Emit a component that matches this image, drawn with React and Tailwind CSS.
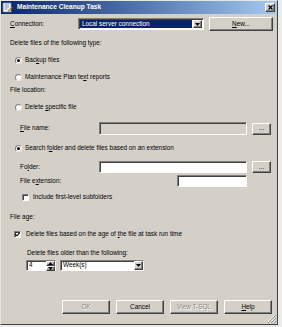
import React from 'react';

const sunken =
  'border border-t-[#808080] border-l-[#808080] border-r-white border-b-white shadow-[inset_1px_1px_0_#404040]';
const raised =
  'border border-t-white border-l-white border-r-[#404040] border-b-[#404040] shadow-[inset_-1px_-1px_0_#808080] bg-[#d4d0c8]';

const U = ({ children }) => <span className="underline underline-offset-[1px]">{children}</span>;

const Arrow = ({ up }) => (
  <svg width="5" height="3" viewBox="0 0 5 3">
    <path d={up ? 'M0 3 L2.5 0 L5 3 Z' : 'M0 0 L5 0 L2.5 3 Z'} fill="#000" />
  </svg>
);

const DropButton = () => (
  <div className={`w-[9px] h-full flex items-center justify-center ${raised}`}>
    <Arrow />
  </div>
);

const Radio = ({ checked }) => (
  <div className="w-[7px] h-[7px] rounded-full bg-white border border-t-[#808080] border-l-[#808080] border-r-[#e8e8e8] border-b-[#e8e8e8] flex items-center justify-center">
    {checked && <div className="w-[3px] h-[3px] rounded-full bg-black" />}
  </div>
);

const Checkbox = ({ checked }) => (
  <div className={`w-[7px] h-[7px] bg-white flex items-center justify-center ${sunken}`}>
    {checked && (
      <svg width="5" height="5" viewBox="0 0 5 5">
        <path d="M0.5 2.3 L2 3.8 L4.6 0.8" stroke="#000" strokeWidth="1.1" fill="none" />
      </svg>
    )}
  </div>
);

const Button = ({ children, disabled, className = '' }) => (
  <div
    className={`flex items-center justify-center ${raised} ${className} ${
      disabled ? 'text-[#8a8a8a] [text-shadow:1px_1px_0_#fff]' : ''
    }`}
  >
    {children}
  </div>
);

export default function App() {
  return (
    <div className="w-[282px] h-[327px] bg-[#ececec] font-['Liberation_Sans',Arial,sans-serif] text-[6.4px] leading-none text-black">
      <div className="relative w-[278px] h-[325px] bg-[#d4d0c8] border-t border-l border-t-[#e8e6e0] border-l-[#e8e6e0] border-r border-b border-r-[#404040] border-b-[#404040] flex flex-col">
        {/* title bar */}
        <div className="h-[13px] bg-gradient-to-r from-[#0a246a] to-[#a6caf0] flex items-center pl-[1px] pr-[2px]">
          <svg width="11" height="11" viewBox="0 0 11 11">
            <rect x="1" y="1" width="8" height="9" fill="#fff" stroke="#6b7fa8" strokeWidth="0.8" />
            <path d="M2.5 3 H7 M2.5 5 H7 M2.5 7 H5.5" stroke="#3b5fb0" strokeWidth="0.8" />
            <path d="M6 9.5 L10 5" stroke="#c08a30" strokeWidth="1.4" />
          </svg>
          <span className="ml-[4px] text-white font-bold text-[6.6px]">Maintenance Cleanup Task</span>
          <div className={`ml-auto w-[10px] h-[9px] flex items-center justify-center ${raised}`}>
            <svg width="5" height="5" viewBox="0 0 5 5">
              <path d="M0.5 0.5 L4.5 4.5 M4.5 0.5 L0.5 4.5" stroke="#000" strokeWidth="1.2" />
            </svg>
          </div>
        </div>

        {/* connection */}
        <div className="flex items-center h-[14px] mt-[3px] ml-[9px]">
          <span className="w-[68px]">
            <U>C</U>onnection:
          </span>
          <div className={`w-[126px] h-[12px] flex bg-white p-[1px] ${sunken}`}>
            <div className="flex-1 bg-[#0a246a] text-white flex items-center pl-[2px] mr-[1px]">
              Local server connection
            </div>
            <DropButton />
          </div>
          <Button className="ml-[5px] w-[64px] h-[14px]">
            <U>N</U>ew...
          </Button>
        </div>

        <div className="flex items-center h-[10px] mt-[7px] ml-[9px]">Delete files of the following type:</div>

        <div className="flex items-center h-[10px] mt-[7px] ml-[14px] gap-[3px]">
          <Radio checked />
          <span>
            Bac<U>k</U>up files
          </span>
        </div>

        <div className="flex items-center h-[10px] mt-[7px] ml-[14px] gap-[3px]">
          <Radio />
          <span>
            Maintenance Plan te<U>x</U>t reports
          </span>
        </div>

        <div className="flex items-center h-[10px] mt-[3px] ml-[9px]">File location:</div>

        <div className="flex items-center h-[10px] mt-[7px] ml-[14px] gap-[3px]">
          <Radio />
          <span>
            Delete <U>s</U>pecific file
          </span>
        </div>

        <div className="flex items-center h-[13px] mt-[10px] ml-[19px]">
          <span className="w-[79px]">
            <U>F</U>ile name:
          </span>
          <div className={`w-[148px] h-[13px] bg-[#d4d0c8] ${sunken}`} />
          <Button className="ml-[5px] w-[19px] h-[12px]">...</Button>
        </div>

        <div className="flex items-center h-[10px] mt-[8px] ml-[14px] gap-[3px]">
          <Radio checked />
          <span>
            Search f<U>o</U>lder and delete files based on an extension
          </span>
        </div>

        <div className="flex items-center h-[12px] mt-[8px] ml-[19px]">
          <span className="w-[79px]">
            Fo<U>l</U>der:
          </span>
          <div className={`w-[148px] h-[12px] bg-white ${sunken}`} />
          <Button className="ml-[5px] w-[19px] h-[12px]">...</Button>
        </div>

        <div className="flex items-center h-[12px] mt-[2px] ml-[19px]">
          <span className="w-[157px]">
            File e<U>x</U>tension:
          </span>
          <div className={`w-[70px] h-[12px] bg-white ${sunken}`} />
        </div>

        <div className="flex items-center h-[10px] mt-[5px] ml-[21px] gap-[4px]">
          <Checkbox />
          <span>Include first-level subfolders</span>
        </div>

        <div className="flex items-center h-[10px] mt-[10px] ml-[9px]">File age:</div>

        <div className="flex items-center h-[10px] mt-[7px] ml-[13px] gap-[5px]">
          <Checkbox checked />
          <span>
            Delete files based on the age of <U>t</U>he file at task run time
          </span>
        </div>

        <div className="flex items-center h-[10px] mt-[9px] ml-[26px]">Delete files older than the following:</div>

        <div className="flex items-center h-[11px] mt-[2px] ml-[25px]">
          <div className={`w-[30px] h-[11px] bg-white flex ${sunken}`}>
            <span className="flex-1 flex items-center pl-[2px]">4</span>
            <div className="w-[9px] flex flex-col">
              <div className={`flex-1 flex items-center justify-center ${raised}`}>
                <Arrow up />
              </div>
              <div className={`flex-1 flex items-center justify-center ${raised}`}>
                <Arrow />
              </div>
            </div>
          </div>
          <div className={`ml-[4px] w-[84px] h-[11px] bg-white flex ${sunken}`}>
            <span className="flex-1 flex items-center pl-[2px]">Week(s)</span>
            <DropButton />
          </div>
        </div>

        <div className="flex items-center h-[14px] mt-[29px] ml-[61px] gap-[6px]">
          <Button disabled className="w-[48px] h-[14px]">
            OK
          </Button>
          <Button className="w-[48px] h-[14px]">Cancel</Button>
          <Button disabled className="w-[48px] h-[14px]">
            View T-SQL
          </Button>
          <Button className="w-[48px] h-[14px]">
            <U>H</U>elp
          </Button>
        </div>

        {/* size grip */}
        <svg className="absolute right-[1px] bottom-[1px]" width="9" height="9" viewBox="0 0 9 9">
          <path d="M8 1 L1 8 M8 4 L4 8 M8 7 L7 8" stroke="#fff" strokeWidth="0.8" />
          <path d="M9 1 L1 9 M9 4 L4 9 M9 7 L7 9" stroke="#808080" strokeWidth="0.8" />
        </svg>
      </div>
    </div>
  );
}
